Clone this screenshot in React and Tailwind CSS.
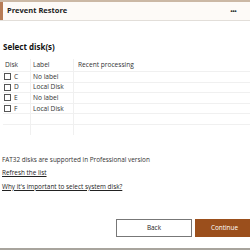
export default function App() {
  const rows = [
    ["C", "No label"],
    ["D", "Local Disk"],
    ["E", "No label"],
    ["F", "Local Disk"],
    ["", ""],
    ["", ""],
  ];
  return (
    <div className="w-[250px] h-[250px] overflow-hidden bg-white relative flex flex-col" style={{ fontFamily: "'Open Sans', 'Liberation Sans', sans-serif" }}>
      <div className="h-[2px] bg-[#cbb8a5]" />
      <div className="h-[19px] flex items-center bg-[#fdfaf7] border-b border-[#e2ded9]">
        <div className="w-[3px] h-full bg-[#b77b55]" />
        <div className="ml-[4px] text-[7.5px] font-bold text-[#222]">Prevent Restore</div>
        <div className="ml-auto mr-[14px] text-[8px] leading-none text-[#333] tracking-[-1px]">•••</div>
      </div>
      <div className="mt-[20px] ml-[3px] text-[8px] font-bold text-[#111]">Select disk(s)</div>
      <div className="mt-[6px] ml-[3px] text-[6.6px] text-[#333]">
        <div className="flex h-[12px] items-center">
          <div className="w-[27px] pl-[2px]">Disk</div>
          <div className="w-[43px] pl-[2px] border-l border-[#f0f0f0] h-full flex items-center">Label</div>
          <div className="flex-1 pl-[4px] border-l border-[#f0f0f0] h-full flex items-center">Recent processing</div>
        </div>
        {rows.map((r, i) => (
          <div key={i} className="flex h-[10.6px] items-center border-t border-[#f0f0f0]">
            <div className="w-[27px] pl-[1px] flex items-center gap-[3px]">
              {r[0] && <span className="w-[7px] h-[7px] border border-[#555] bg-white inline-block" />}
              <span>{r[0]}</span>
            </div>
            <div className="w-[43px] pl-[2px] border-l border-[#f0f0f0] h-full flex items-center">{r[1]}</div>
            <div className="flex-1 border-l border-[#f0f0f0] h-full" />
          </div>
        ))}
      </div>
      <div className="mt-[20px] ml-[2px] text-[6.4px] text-[#333]">FAT32 disks are supported in Professional version</div>
      <div className="mt-[4px] ml-[2px] text-[6.4px] text-[#222] underline">Refresh the list</div>
      <div className="mt-[4px] ml-[2px] text-[6.4px] text-[#222] underline">Why it's important to select system disk?</div>
      <div className="mt-auto flex justify-end gap-[3px] mb-[11px]">
        <div className="w-[76px] h-[18px] border border-[#777] flex items-center justify-center text-[6.4px] text-[#222]">Back</div>
        <div className="w-[55px] h-[18px] bg-[#9b4f1c] flex items-center justify-center text-[6.4px] text-white pl-[4px]">Continue</div>
      </div>
      <div className="h-[2px] bg-[#a8a49d]" />
    </div>
  );
}
